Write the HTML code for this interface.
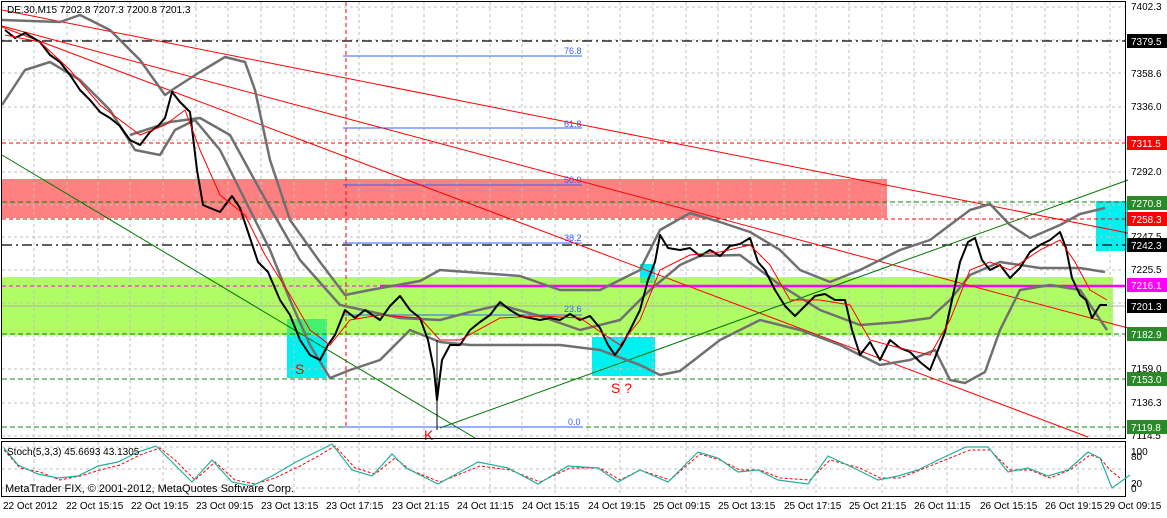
<!DOCTYPE html><html><head><style>
body{margin:0;background:#fff;width:1167px;height:513px;overflow:hidden;font-family:"Liberation Sans",sans-serif}
svg text{font-family:"Liberation Sans",sans-serif}
</style></head><body>
<svg width="1167" height="513" viewBox="0 0 1167 513" xmlns="http://www.w3.org/2000/svg">
<rect width="1167" height="513" fill="#fff"/>
<rect x="2" y="179" width="885" height="39" fill="#ff8080"/>
<rect x="2" y="277" width="1111" height="58" fill="#b0fc64"/>
<rect x="287" y="319" width="40" height="59" fill="#00f0f0"/>
<rect x="287" y="319" width="40" height="16" fill="#44f070"/>
<rect x="592" y="337" width="63" height="39" fill="#00f0f0"/>
<rect x="640" y="264" width="15" height="13" fill="#00f0f0"/>
<rect x="640" y="277" width="15" height="6" fill="#44f070"/>
<rect x="1096" y="201" width="32" height="50" fill="#00f0f0"/>
<g stroke="#c0c0c0" stroke-dasharray="3,3" stroke-width="1">
<path d="M2 7H1125M2 40H1125M2 73H1125M2 107H1125M2 140H1125M2 172H1125M2 205H1125M2 237H1125M2 270H1125M2 303H1125M2 336H1125M2 369H1125M2 403H1125M2 436H1125"/>
<path d="M34 2V438M67 2V438M98 2V438M130 2V438M163 2V438M196 2V438M228 2V438M261 2V438M294 2V438M326 2V438M359 2V438M392 2V438M424 2V438M457 2V438M490 2V438M522 2V438M555 2V438M588 2V438M620 2V438M653 2V438M686 2V438M718 2V438M751 2V438M784 2V438M816 2V438M849 2V438M882 2V438M914 2V438M947 2V438M980 2V438M1012 2V438M1045 2V438M1078 2V438M1110 2V438"/>
<path d="M2 447H1125M2 469H1125M2 488H1125M34 442V496M98 442V496M163 442V496M228 442V496M294 442V496M359 442V496M424 442V496M490 442V496M555 442V496M620 442V496M686 442V496M751 442V496M816 442V496M882 442V496M947 442V496M1012 442V496M1078 442V496"/>
</g>
<path d="M2 41H1125M2 245H1125" stroke="#000" stroke-width="1.3" stroke-dasharray="10,4,2,4"/>
<path d="M2 143H1125M2 219H1125" stroke="#f00" stroke-dasharray="4,3"/>
<path d="M2 202H1125M2 334H1125M2 379H1125M2 427H1125" stroke="#080" stroke-dasharray="5,3"/>
<path d="M2 306H1125" stroke="#b0b0b0"/>
<path d="M346 2V428" stroke="#f00" stroke-dasharray="4,3"/>
<path d="M380 286H1125" stroke="#f0f" stroke-width="2.5"/>
<path d="M2 286H380" stroke="#f0f" stroke-dasharray="4,3"/>
<g stroke="#3060ff"><path d="M343 56H582M343 128H582M343 185H582M343 243H582M343 315H582M343 427H582"/></g>
<g fill="#3060ff" font-size="9"><text x="564" y="54">76.8</text><text x="564" y="127">61.8</text><text x="564" y="183">50.0</text><text x="564" y="241">38.2</text><text x="564" y="312">23.6</text><text x="568" y="425">0.0</text></g>
<g stroke="#f00" stroke-width="1" fill="none">
<path d="M2 10L1128 233"/><path d="M2 26L1128 328"/><path d="M2 27L1088 437"/>
</g>
<g stroke="#070" fill="none"><path d="M440 428L1128 180"/><path d="M2 155L475 438"/></g>
<g fill="none" stroke="#707070" stroke-width="2.5" stroke-linejoin="round">
<polyline points="2,20 60,22 80,15 110,30 140,60 165,95 175,88 200,72 225,57 245,62 255,90 270,160 290,220 320,262 345,295 370,290 420,281 440,270 520,276 560,290 600,290 640,270 660,230 690,213 720,222 750,232 780,250 800,270 830,282 860,270 900,250 930,240 950,225 970,210 990,204 1010,225 1030,238 1060,225 1080,214 1105,208"/>
<polyline points="2,105 25,70 50,62 80,80 110,110 135,150 160,155 175,130 195,120 220,150 245,200 270,250 290,300 310,345 330,378 350,370 380,360 410,330 440,342 470,345 520,345 560,345 600,350 640,365 660,375 680,371 720,340 760,320 800,330 840,345 880,365 910,360 935,350 950,380 965,383 985,372 1000,330 1020,290 1050,285 1080,290 1107,330"/>
<polyline points="130,135 170,122 200,118 230,135 260,190 300,260 340,305 400,318 440,320 470,312 500,305 540,316 580,330 620,320 650,290 680,265 700,256 740,255 780,285 820,310 860,325 900,322 930,318 950,300 970,275 1000,262 1040,268 1080,268 1105,272"/>
</g>
<!-- candles approximated -->
<polyline fill="none" stroke="#000" stroke-width="2" stroke-linejoin="round" points="5,30 15,38 25,33 40,42 50,55 60,62 70,75 80,90 90,100 100,112 110,118 120,126 130,140 140,145 150,132 158,126 165,118 172,92 180,102 190,112 197,170 203,205 210,208 220,212 232,196 240,208 250,238 258,262 268,272 280,300 290,315 300,340 310,355 320,360 328,345 335,335 345,310 355,318 365,310 380,320 390,306 400,296 410,310 420,318 428,340 434,370 437,400 442,360 450,345 460,345 470,330 480,322 490,315 500,302 510,310 520,316 530,318 540,320 550,318 560,320 570,314 580,320 590,316 600,328 608,345 615,355 622,345 630,330 640,310 648,280 655,262 660,235 668,248 680,250 690,248 700,256 710,250 720,256 730,246 740,244 750,238 758,262 765,270 775,290 785,306 795,316 805,306 815,296 825,294 835,300 845,300 852,330 860,355 870,342 880,360 890,340 900,348 910,352 920,362 930,370 940,345 945,332 952,300 960,262 968,242 975,238 982,260 990,270 1000,265 1010,278 1020,268 1030,252 1040,245 1050,240 1060,232 1066,248 1072,278 1080,295 1086,300 1092,318 1100,305 1107,305"/>
<path d="M437 340V430" stroke="#000"/>
<polyline fill="none" stroke="#f00" stroke-width="1" points="5,35 40,42 70,70 100,105 140,135 165,125 185,110 200,150 220,195 245,215 265,255 290,295 310,330 330,345 350,320 380,315 420,318 440,340 460,340 500,318 540,316 580,318 605,335 620,345 640,320 660,270 690,255 720,252 750,245 770,265 790,300 820,300 850,305 870,340 900,348 930,355 950,320 970,270 990,262 1010,270 1040,250 1060,240 1075,262 1090,290 1107,300"/>
<text x="295" y="374" fill="#f00" font-size="14">S</text>
<text x="611" y="393" fill="#f00" font-size="14">S ?</text>
<text x="424" y="440" fill="#f00" font-size="14">K</text>
<text x="7" y="13" font-size="10" fill="#000">DE.30,M15  7202.8 7207.3 7200.8 7201.3</text>
<rect x="1.5" y="1.5" width="1124" height="437" fill="none" stroke="#000"/>
<rect x="1.5" y="441.5" width="1124" height="55" fill="none" stroke="#000"/>
<polyline fill="none" stroke="#f00" stroke-dasharray="3,2" points="4,450 20,468 40,472 60,480 80,476 100,470 120,465 140,455 160,448 175,460 195,480 215,462 235,480 255,484 275,478 300,466 320,455 335,446 355,468 375,474 395,458 410,470 440,482 480,466 510,470 540,482 570,468 600,468 620,480 640,470 670,480 700,454 720,460 740,470 760,470 780,478 810,480 830,460 860,468 880,478 900,478 920,470 940,462 970,450 990,450 1010,470 1030,470 1050,478 1070,470 1090,455 1100,458 1110,470 1120,478"/>
<polyline fill="none" stroke="#20b0a0" stroke-width="1.2" points="4,448 18,465 38,474 58,478 78,476 98,466 118,462 138,452 156,446 172,462 192,482 212,460 232,482 252,486 272,476 296,462 316,452 332,444 352,470 372,476 392,454 406,468 438,484 478,462 508,468 538,484 568,466 598,468 618,482 640,470 668,482 698,452 718,458 738,472 758,470 778,480 808,484 828,456 858,470 878,480 898,476 918,470 938,460 966,447 988,447 1008,472 1028,468 1048,476 1068,470 1088,452 1100,458 1112,488 1130,475"/>
<text x="7" y="455" font-size="10" fill="#000">Stoch(5,3,3) 45.6693 43.1305</text>
<text x="5" y="492" font-size="11" fill="#000">MetaTrader FIX, © 2001-2012, MetaQuotes Software Corp.</text>
<g font-size="10" fill="#000">
<text x="1131" y="10">7402.3</text><text x="1131" y="77">7358.6</text><text x="1131" y="110">7336.0</text><text x="1131" y="175">7292.0</text><text x="1131" y="240">7247.5</text><text x="1131" y="273">7225.5</text><text x="1131" y="372">7159.0</text><text x="1131" y="406">7136.3</text><text x="1131" y="439">7114.5</text>
<text x="1131" y="455">100</text><text x="1131" y="460">80</text><text x="1131" y="487">20</text><text x="1131" y="492">0</text>
</g>
<g font-size="10">
<rect x="1127" y="34" width="40" height="14" fill="#000"/><text x="1131" y="45" fill="#fff">7379.5</text>
<rect x="1127" y="136" width="40" height="14" fill="#f00"/><text x="1131" y="147" fill="#fff">7311.5</text>
<rect x="1127" y="196" width="40" height="14" fill="#2a8a2a"/><text x="1131" y="207" fill="#fff">7270.8</text>
<rect x="1127" y="212" width="40" height="14" fill="#f00"/><text x="1131" y="223" fill="#fff">7258.3</text>
<rect x="1127" y="238" width="40" height="14" fill="#000"/><text x="1131" y="249" fill="#fff">7242.3</text>
<rect x="1127" y="278" width="40" height="14" fill="#f0f"/><text x="1131" y="289" fill="#fff">7216.1</text>
<rect x="1127" y="299" width="40" height="14" fill="#000"/><text x="1131" y="310" fill="#fff">7201.3</text>
<rect x="1127" y="327" width="40" height="14" fill="#2a8a2a"/><text x="1131" y="338" fill="#fff">7182.9</text>
<rect x="1127" y="372" width="40" height="14" fill="#2a8a2a"/><text x="1131" y="383" fill="#fff">7153.0</text>
<rect x="1127" y="420" width="40" height="14" fill="#2a8a2a"/><text x="1131" y="431" fill="#fff">7119.8</text>
</g>
<g font-size="10" fill="#000">
<text x="3" y="509">22 Oct 2012</text><text x="66" y="509">22 Oct 15:15</text><text x="131" y="509">22 Oct 19:15</text><text x="196" y="509">23 Oct 09:15</text><text x="261" y="509">23 Oct 13:15</text><text x="326" y="509">23 Oct 17:15</text><text x="392" y="509">23 Oct 21:15</text><text x="457" y="509">24 Oct 11:15</text><text x="522" y="509">24 Oct 15:15</text><text x="588" y="509">24 Oct 19:15</text><text x="653" y="509">25 Oct 09:15</text><text x="718" y="509">25 Oct 13:15</text><text x="784" y="509">25 Oct 17:15</text><text x="849" y="509">25 Oct 21:15</text><text x="914" y="509">26 Oct 11:15</text><text x="980" y="509">26 Oct 15:15</text><text x="1045" y="509">26 Oct 19:15</text><text x="1104" y="509">29 Oct 09:15</text>
</g>
</svg>
</body></html>
